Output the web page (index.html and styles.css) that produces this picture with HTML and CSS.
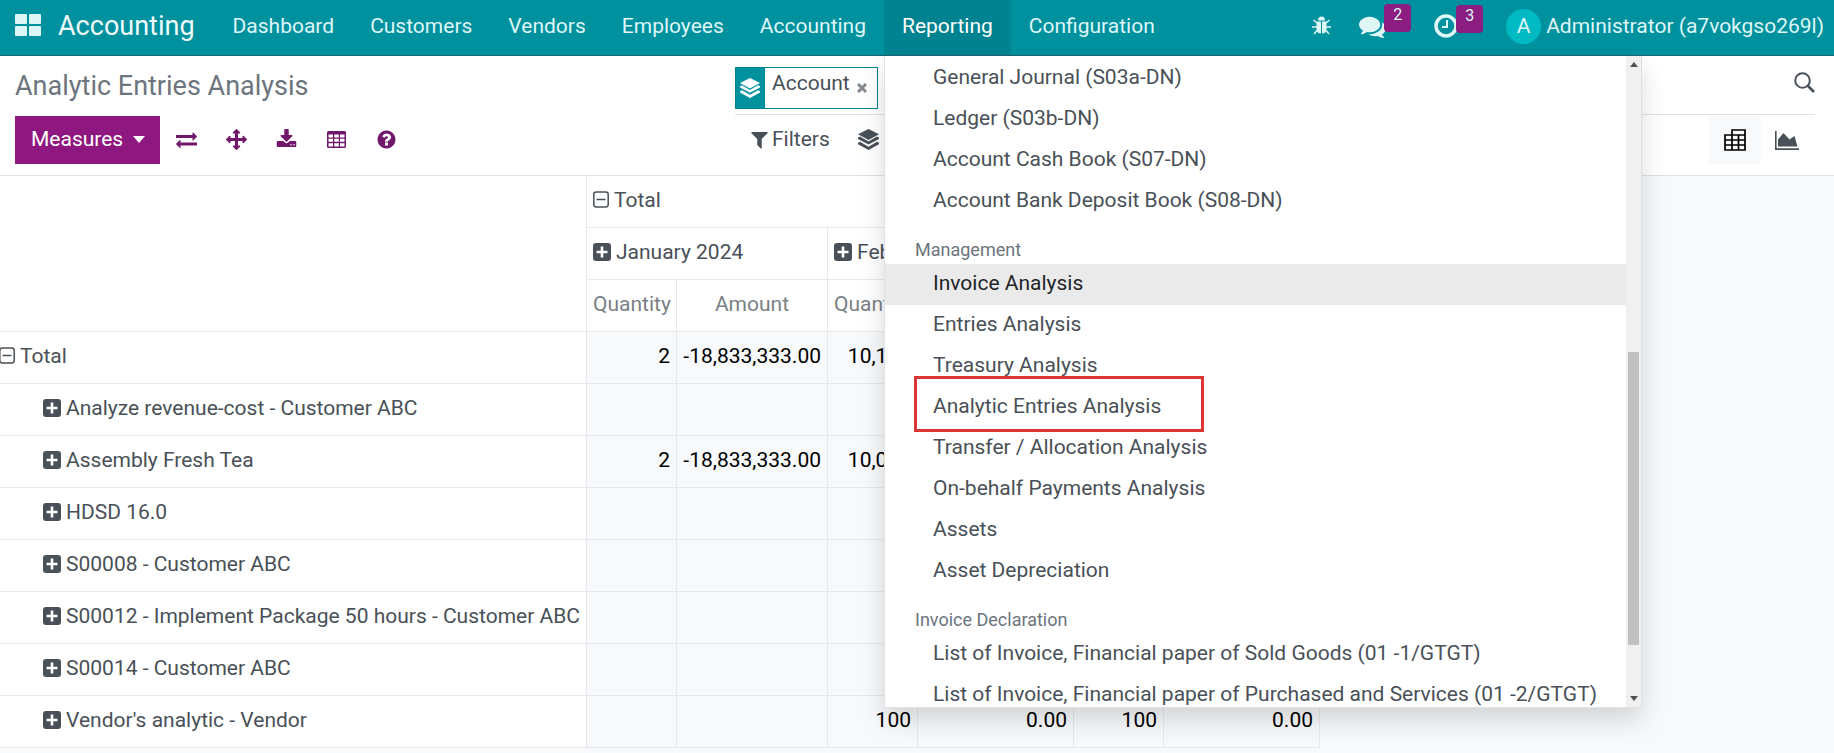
FILE: index.html
```html
<!DOCTYPE html>
<html lang="en">

<head>
    <meta charset="UTF-8">
    <meta name="viewport" content="width=device-width, initial-scale=1.0">
    <title>Analytic Entries Analysis - Accounting</title>
    <link rel="stylesheet" href="styles.css">
</head>

<body>
    <!-- Shared icons -->
    <svg class="sprite" aria-hidden="true">
        <symbol id="plus" viewBox="0 0 18 18">
            <rect width="18" height="18" rx="3" fill="currentColor"/>
            <path d="M9 3.5v11M3.5 9h11" stroke="#fff" stroke-width="2.6"/>
        </symbol>
        <symbol id="minus" viewBox="0 0 16 18">
            <rect x=".8" y="1" width="14.4" height="15" rx="2.4" fill="none" stroke="currentColor" stroke-width="1.5"/>
            <path d="M3.5 8.5h9" stroke="currentColor" stroke-width="1.5"/>
        </symbol>
        <symbol id="layers" viewBox="0 0 20 20">
            <path d="M10 0l10 5-10 5.5L0 5z" fill="currentColor"/>
            <path d="M0 8.2l2-1L10 12l8-4.8 2 1v1.3l-10 5.2L0 9.5z" fill="currentColor"/>
            <path d="M0 13.2l2-1 8 4.6 8-4.6 2 1v1.3L10 20 0 14.5z" fill="currentColor"/>
        </symbol>
    </svg>

    <header class="navbar">
        <a class="apps" href="#" aria-label="Apps">
            <svg width="26" height="22" viewBox="0 0 26 22" fill="currentColor">
                <rect width="12" height="10" rx="1"/><rect x="14" width="12" height="10" rx="1"/>
                <rect y="12" width="12" height="10" rx="1"/><rect x="14" y="12" width="12" height="10" rx="1"/>
            </svg>
        </a>
        <a class="brand" href="#">Accounting</a>
        <nav class="nav-links">
            <a href="#">Dashboard</a>
            <a href="#">Customers</a>
            <a href="#">Vendors</a>
            <a href="#">Employees</a>
            <a href="#">Accounting</a>
            <div class="nav-item">
                <a class="active" href="#">Reporting</a>
                <div class="dropdown">
                    <div class="menu">
                        <a href="#">General Journal (S03a-DN)</a>
                        <a href="#">Ledger (S03b-DN)</a>
                        <a href="#">Account Cash Book (S07-DN)</a>
                        <a href="#">Account Bank Deposit Book (S08-DN)</a>
                        <h6>Management</h6>
                        <a class="hovered" href="#">Invoice Analysis</a>
                        <a href="#">Entries Analysis</a>
                        <a href="#">Treasury Analysis</a>
                        <a class="marked" href="#">Analytic Entries Analysis</a>
                        <a href="#">Transfer / Allocation Analysis</a>
                        <a href="#">On-behalf Payments Analysis</a>
                        <a href="#">Assets</a>
                        <a href="#">Asset Depreciation</a>
                        <h6>Invoice Declaration</h6>
                        <a href="#">List of Invoice, Financial paper of Sold Goods (01 -1/GTGT)</a>
                        <a href="#">List of Invoice, Financial paper of Purchased and Services (01 -2/GTGT)</a>
                    </div>
                    <div class="scrollbar">
                        <svg width="8" height="5" viewBox="0 0 8 5"><path d="M4 0l4 5H0z" fill="#505050"/></svg>
                        <div class="thumb"></div>
                        <svg width="8" height="5" viewBox="0 0 8 5"><path d="M0 0h8L4 5z" fill="#505050"/></svg>
                    </div>
                </div>
            </div>
            <a href="#">Configuration</a>
        </nav>
        <div class="systray">
            <button type="button" class="debug" aria-label="Debug">
                <svg width="19" height="20" viewBox="0 0 19 20" fill="currentColor">
                    <path d="M6 4.500a3.500 4 0 0 1 7 0z"/>
                    <path d="M4.500 5.500H9v12c-3 0-4.500-2-4.500-5zM10 5.500h4.500v7c0 3-1.500 5-4.500 5z"/>
                    <path d="M1.500 4l3.500 3M17.500 4L14 7M0 11h5M19 11h-5M2 18l3.500-4M17 18l-3.500-4" stroke="currentColor" stroke-width="1.5"/>
                </svg>
            </button>
            <button type="button" aria-label="Messages">
                <svg width="27" height="27" viewBox="0 0 1792 1792" fill="currentColor"><path d="M1408 768q0 139-94 257t-256.500 186.500-353.500 68.500q-86 0-176-16-124 88-278 128-36 9-86 16h-3q-11 0-20.500-8t-11.500-21q-1-3-1-6.500t.5-6.500 2-6l2.500-5 3.500-5.500 4-5 4.500-5 4-4.500q5-6 23-25t26-29.500 22.500-29 25-38.500 20.500-44q-124-72-195-177t-71-224q0-139 94-257t256.500-186.500 353.500-68.500 353.500 68.500 256.500 186.500 94 257zm384 256q0 120-71 224.500t-195 176.500q10 24 20.500 44t25 38.500 22.500 29 26 29.500 23 25q1 1 4 4.500t4.500 5 4 5 3.500 5.500l2.500 5 2 6 .5 6.500-1 6.500q-3 14-13 22t-22 7q-50-7-86-16-154-40-278-128-90 16-176 16-271 0-472-132 58 4 88 4 161 0 309-45t264-129q125-92 192-212t67-254q0-77-23-152 129 71 204 178t75 230z"/></svg>
                <span class="badge">2</span>
            </button>
            <button type="button" aria-label="Activities">
                <svg width="24" height="24" viewBox="0 0 24 24" fill="none" stroke="currentColor">
                    <circle cx="12" cy="12" r="10" stroke-width="3.5"/>
                    <path d="M13 6v7H8" stroke-width="2"/>
                </svg>
                <span class="badge">3</span>
            </button>
            <button type="button" class="user"><span class="avatar">A</span>Administrator (a7vokgso269l)</button>
        </div>
    </header>

    <section class="control-panel">
        <h1>Analytic Entries Analysis</h1>
        <div class="search">
            <div class="facet">
                <span class="facet-icon"><svg width="20" height="22"><use href="#layers"/></svg></span>
                <span class="facet-label">Account</span>
                <button type="button" aria-label="Remove">
                    <svg width="10" height="10" viewBox="0 0 10 10"><path d="M1 1l8 8M9 1L1 9" stroke="currentColor" stroke-width="3"/></svg>
                </button>
            </div>
            <input type="text" aria-label="Search">
            <button type="button" aria-label="Search">
                <svg width="21" height="21" viewBox="0 0 21 21" fill="none" stroke="currentColor">
                    <circle cx="8.5" cy="8.5" r="7.3" stroke-width="2"/><path d="M13.5 13.5L20 20" stroke-width="2.6"/>
                </svg>
            </button>
        </div>
        <div class="buttons">
            <button type="button" class="measures">Measures
                <svg width="12" height="7" viewBox="0 0 12 7"><path d="M0 0h12L6 7z" fill="currentColor"/></svg>
            </button>
            <button type="button" class="tool" aria-label="Flip axis">
                <svg viewBox="0 0 1792 1792"><path d="M1792 1184v192q0 13-9.500 22.500t-22.500 9.500h-1376v192q0 13-9.500 22.500t-22.500 9.500q-12 0-24-10l-319-320q-9-9-9-22 0-14 9-23l320-320q9-9 23-9 13 0 22.500 9.500t9.500 22.500v192h1376q13 0 22.500 9.500t9.500 22.500zm0-544q0 14-9 23l-320 320q-9 9-23 9-13 0-22.500-9.500t-9.500-22.500v-192h-1376q-13 0-22.500-9.500t-9.500-22.500v-192q0-13 9.500-22.500t22.500-9.500h1376v-192q0-14 9-23t23-9q12 0 24 10l319 319q9 9 9 23z"/></svg>
            </button>
            <button type="button" class="tool" aria-label="Expand all">
                <svg viewBox="0 0 1792 1792"><path d="M1792 896q0 26-19 45l-256 256q-19 19-45 19t-45-19-19-45v-128h-384v384h128q26 0 45 19t19 45-19 45l-256 256q-19 19-45 19t-45-19l-256-256q-19-19-19-45t19-45 45-19h128v-384h-384v128q0 26-19 45t-45 19-45-19l-256-256q-19-19-19-45t19-45l256-256q19-19 45-19t45 19 19 45v128h384v-384h-128q-26 0-45-19t-19-45 19-45l256-256q19-19 45-19t45 19l256 256q19 19 19 45t-19 45-45 19h-128v384h384v-128q0-26 19-45t45-19 45 19l256 256q19 19 19 45z"/></svg>
            </button>
            <button type="button" class="tool" aria-label="Download xlsx">
                <svg viewBox="0 0 1792 1792"><path d="M1344 1344q0-26-19-45t-45-19-45 19-19 45 19 45 45 19 45-19 19-45zm256 0q0-26-19-45t-45-19-45 19-19 45 19 45 45 19 45-19 19-45zm128-224v320q0 40-28 68t-68 28h-1472q-40 0-68-28t-28-68v-320q0-40 28-68t68-28h465l135 136q58 56 136 56t136-56l136-136h464q40 0 68 28t28 68zm-325-569q17 41-14 70l-448 448q-18 19-45 19t-45-19l-448-448q-31-29-14-70 17-39 59-39h256v-448q0-26 19-45t45-19h256q26 0 45 19t19 45v448h256q42 0 59 39z"/></svg>
            </button>
            <button type="button" class="tool" aria-label="Insert in spreadsheet">
                <svg viewBox="0 0 21 21"><path fill-rule="evenodd" d="M2.500 2h16q1.500 0 1.500 1.500v14q0 1.500-1.500 1.500h-16Q1 19 1 17.500v-14Q1 2 2.500 2zM2.500 5.500v3h4.500v-3zM8.300 5.500v3h4.500v-3zM14 5.500v3h4.500v-3zM2.500 9.800v3h4.500v-3zM8.300 9.800v3h4.500v-3zM14 9.800v3h4.500v-3zM2.500 14.200v3.300h4.500v-3.300zM8.300 14.200v3.300h4.500v-3.300zM14 14.200v3.300h4.500v-3.300z"/></svg>
            </button>
            <button type="button" class="tool" aria-label="Help">
                <svg viewBox="0 0 1792 1792"><path d="M1024 1376v-192q0-14-9-23t-23-9h-192q-14 0-23 9t-9 23v192q0 14 9 23t23 9h192q14 0 23-9t9-23zm256-672q0-88-55.500-163t-138.500-116-170-41q-243 0-371 213-15 24 8 42l132 100q7 6 19 6 16 0 25-12 53-68 86-92 34-24 86-24 48 0 85.500 26t37.500 59q0 38-20 61t-68 45q-63 28-115.500 86.500t-52.500 125.500v36q0 14 9 23t23 9h192q14 0 23-9t9-23q0-19 21.500-49.500t54.500-49.500q32-18 49-28.500t46-35 44.500-48 28-60.500 12.500-81zm384 192q0 209-103 385.500t-279.500 279.500-385.500 103-385.500-103-279.500-279.500-103-385.500 103-385.500 279.500-279.500 385.500-103 385.500 103 279.500 279.500 103 385.500z"/></svg>
            </button>
        </div>
        <div class="options">
            <button type="button" class="option">
                <svg width="21" height="21" viewBox="0 0 1792 1792" fill="currentColor"><path d="M1595 295q17 41-14 70l-493 493v742q0 42-39 59-13 5-25 5-27 0-45-19l-256-256q-19-19-19-45v-486l-493-493q-31-29-14-70 17-39 59-39h1280q42 0 59 39z"/></svg>
                Filters
            </button>
            <button type="button" class="option" aria-label="Group By">
                <svg width="21" height="21"><use href="#layers"/></svg>
            </button>
            <div class="views">
                <button type="button" class="active" aria-label="Pivot">
                    <svg width="22" height="22" viewBox="0 0 22 22" fill="none" stroke="currentColor" stroke-width="1.7">
                        <path d="M8 6V1h13v20H1V6h20M1 11h20M1 16h20M8 6v15M14.500 6v15"/>
                    </svg>
                </button>
                <button type="button" aria-label="Graph">
                    <svg width="24" height="19" viewBox="0 0 24 19" fill="currentColor">
                        <path d="M0 0h1.600v17.200H24V19H0zM3 15.500V8.500L8.500 2l6 6.500L19.500 5l3 10.500z"/>
                    </svg>
                </button>
            </div>
        </div>
    </section>

    <table class="pivot">
        <colgroup>
            <col class="col-label">
            <col class="col-qty"><col class="col-jan">
            <col class="col-qty"><col class="col-amount">
            <col class="col-qty"><col class="col-amount">
        </colgroup>
        <thead>
            <tr>
                <td rowspan="3"></td>
                <th colspan="6"><svg class="minus"><use href="#minus"/></svg>Total</th>
            </tr>
            <tr>
                <th colspan="2"><svg class="plus"><use href="#plus"/></svg>January 2024</th>
                <th colspan="2"><svg class="plus"><use href="#plus"/></svg>February 2024</th>
                <th colspan="2"></th>
            </tr>
            <tr class="fields">
                <th>Quantity</th>
                <th>Amount</th>
                <th>Quantity</th>
                <th>Amount</th>
                <th>Quantity</th>
                <th>Amount</th>
            </tr>
        </thead>
        <tbody>
            <tr>
                <th class="root"><svg class="minus"><use href="#minus"/></svg>Total</th>
                <td>2</td><td>-18,833,333.00</td><td>10,100</td><td></td><td></td><td></td>
            </tr>
            <tr>
                <th><svg class="plus"><use href="#plus"/></svg>Analyze revenue-cost - Customer ABC</th>
                <td></td><td></td><td></td><td></td><td></td><td></td>
            </tr>
            <tr>
                <th><svg class="plus"><use href="#plus"/></svg>Assembly Fresh Tea</th>
                <td>2</td><td>-18,833,333.00</td><td>10,000</td><td></td><td></td><td></td>
            </tr>
            <tr>
                <th><svg class="plus"><use href="#plus"/></svg>HDSD 16.0</th>
                <td></td><td></td><td></td><td></td><td></td><td></td>
            </tr>
            <tr>
                <th><svg class="plus"><use href="#plus"/></svg>S00008 - Customer ABC</th>
                <td></td><td></td><td></td><td></td><td></td><td></td>
            </tr>
            <tr>
                <th><svg class="plus"><use href="#plus"/></svg>S00012 - Implement Package 50 hours - Customer ABC</th>
                <td></td><td></td><td></td><td></td><td></td><td></td>
            </tr>
            <tr>
                <th><svg class="plus"><use href="#plus"/></svg>S00014 - Customer ABC</th>
                <td></td><td></td><td></td><td></td><td></td><td></td>
            </tr>
            <tr>
                <th><svg class="plus"><use href="#plus"/></svg>Vendor's analytic - Vendor</th>
                <td></td><td></td><td>100</td><td>0.00</td><td>100</td><td>0.00</td>
            </tr>
        </tbody>
    </table>
</body>

</html>
```
FILE: styles.css
```css
*,
*::after {
    box-sizing: border-box;
}

body {
    margin: 0;
    font-family: Roboto, sans-serif;
    font-size: 21px;
    line-height: 32px;
    color: #495057;
    background-color: #f8f9fb;
}

a {
    color: inherit;
    text-decoration: none;
}

button {
    display: flex;
    align-items: center;
    padding: 0;
    border: none;
    background: none;
    color: inherit;
    font: inherit;
    cursor: pointer;
}

.sprite {
    position: absolute;
    width: 0;
    height: 0;
}

/* Top bar */
.navbar {
    display: flex;
    align-items: stretch;
    height: 56px;
    padding: 0 10px 0 15px;
    background-color: #00919f;
    border-bottom: 1px solid #1b6474;
    color: #dff6f7;
    white-space: nowrap;
}

.apps {
    display: flex;
    align-items: center;
    padding-bottom: 6px;
}

.brand {
    padding: 0 20px 0 17px;
    font-size: 27px;
    line-height: 52px;
    color: #eefafa;
}

.nav-links {
    display: flex;
}

.nav-links > a,
.nav-item > a {
    display: block;
    padding: 0 18px;
    line-height: 52px;
}

.nav-item {
    position: relative;
    display: flex;
}

.nav-item > .active {
    background-color: #008390;
    color: #fff;
}

.systray {
    display: flex;
    align-items: center;
    margin-left: auto;
    padding-bottom: 3px;
}

.systray button {
    position: relative;
    margin-left: 48px;
}

.systray .debug + button {
    margin-left: 28px;
}

.badge {
    position: absolute;
    left: calc(100% - 2px);
    top: -9px;
    width: 27px;
    height: 28px;
    border-radius: 4px;
    background-color: #8b1c80;
    font-size: 16px;
    line-height: 22px;
    text-align: center;
}

.systray .user {
    gap: 5px;
}

.avatar {
    width: 35px;
    height: 35px;
    border-radius: 50%;
    background-color: #00bac3;
    line-height: 35px;
    text-align: center;
}

/* Reporting menu */
.dropdown {
    position: absolute;
    left: 0;
    top: 56px;
    z-index: 10;
    display: flex;
    width: 758px;
    height: 652px;
    border: 1px solid #dee2e6;
    border-top: none;
    background-color: #fff;
    box-shadow: 0 12px 24px rgba(0, 0, 0, 0.15);
    color: #495057;
}

.menu {
    flex: 1;
    padding-top: 2px;
    overflow: hidden;
}

.menu a {
    position: relative;
    display: block;
    height: 41px;
    padding: 0 48px;
    line-height: 39px;
}

.menu h6 {
    margin: 0;
    padding: 14px 30px 0;
    font-size: 18px;
    font-weight: 400;
    line-height: 28px;
    color: #6c757d;
}

.menu .hovered {
    background-color: #eaeaea;
    color: #212529;
}

.menu .marked::after {
    content: "";
    position: absolute;
    left: 29px;
    top: -11px;
    width: 290px;
    height: 56px;
    border: 3px solid #dc3535;
}

.scrollbar {
    display: flex;
    flex-direction: column;
    align-items: center;
    justify-content: space-between;
    width: 15px;
    padding: 6px 0;
    background-color: #f0f0f0;
}

.thumb {
    width: 11px;
    height: 293px;
    margin-top: 234px;
    background-color: #c1c1c1;
}

/* Title, search and view options */
.control-panel {
    display: grid;
    grid-template-columns: 2fr 3fr;
    row-gap: 1px;
    padding: 0 19px 11px 15px;
    background-color: #fff;
    border-bottom: 1px solid #dee2e6;
}

.control-panel h1 {
    margin: 0;
    padding-top: 10px;
    font-size: 27px;
    font-weight: 400;
    line-height: 40px;
    color: #6c757d;
}

.search {
    display: flex;
    align-items: center;
    padding: 11px 0 5px;
    border-bottom: 1px solid #dee2e6;
}

.facet {
    display: flex;
    height: 42px;
    border: 1px solid #00818d;
}

.facet-icon {
    display: flex;
    align-items: center;
    width: 29px;
    padding-left: 4px;
    background-color: #00919f;
    color: #fff;
}

.facet-label {
    padding: 0 7px;
    line-height: 30px;
}

.facet button {
    padding-right: 10px;
    color: #868b90;
}

.search input {
    flex: 1;
    min-width: 0;
    border: none;
    outline: none;
    font: inherit;
}

.search > button {
    padding-bottom: 11px;
}

.buttons,
.options,
.views {
    display: flex;
}

.measures {
    gap: 10px;
    height: 48px;
    padding: 0 15px 2px 16px;
    background-color: #8f1780;
    color: #fff;
}

.tool {
    width: 50px;
    padding-bottom: 1px;
    justify-content: center;
    color: #71186b;
}

.tool svg {
    width: 21px;
    height: 21px;
    fill: currentColor;
}

.measures + .tool {
    margin-left: 1px;
}

.option {
    gap: 2px;
    padding: 0 14px 2px;
}

.views {
    margin-left: auto;
    padding-right: 2px;
}

.views button {
    width: 52px;
    justify-content: center;
}

.views .active {
    background-color: #f8f9fb;
    color: #000;
}

/* Pivot table */
.pivot {
    width: 1320px;
    table-layout: fixed;
    border-collapse: separate;
    border-spacing: 0;
    white-space: nowrap;
}

.col-label {
    width: 587px;
}

.col-qty {
    width: 90px;
}

.col-jan {
    width: 151px;
}

.col-amount {
    width: 156px;
}

.pivot th,
.pivot td {
    height: 52px;
    padding: 0 6px 4px;
    border: solid #e6e8eb;
    border-width: 0 1px 1px 0;
    font-weight: 400;
    text-align: left;
}

.pivot th,
.pivot thead td {
    background-color: #fff;
}

.pivot tbody th {
    padding-left: 43px;
}

.pivot tbody .root {
    padding-left: 0;
}

.pivot tbody td {
    color: #000;
    text-align: right;
}

.pivot .fields th {
    color: #7a7f85;
    text-align: center;
}

.pivot svg {
    width: 18px;
    height: 18px;
    margin-right: 5px;
    vertical-align: -2px;
}

.pivot .minus {
    width: 16px;
}

.pivot .root .minus {
    margin-left: -1px;
}
```
